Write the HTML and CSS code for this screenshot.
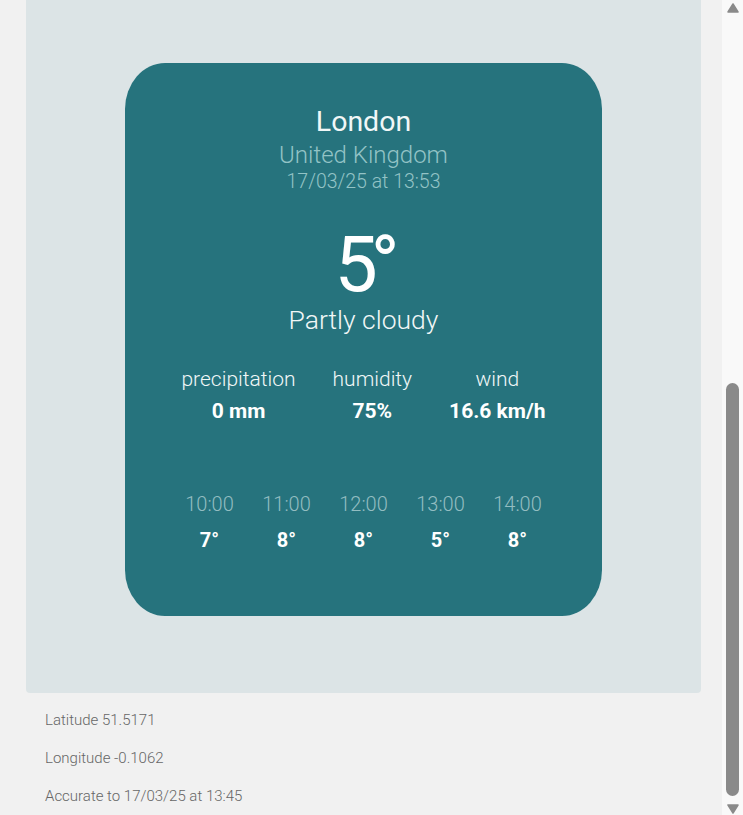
FILE: index.html
```html
<!DOCTYPE html>
<html lang="en">
<head>
<meta charset="utf-8">
<title>Weather</title>
<link rel="stylesheet" href="styles.css">
</head>
<body>
<div class="page">
  <main class="content">
    <section class="panel">
      <article class="card">
        <h1 class="city">London</h1>
        <div class="country">United Kingdom</div>
        <div class="stamp">17/03/25 at 13:53</div>
        <div class="temp">5°</div>
        <div class="cond">Partly cloudy</div>
        <div class="stats">
          <div class="stat"><div class="label">precipitation</div><div class="value">0 mm</div></div>
          <div class="stat"><div class="label">humidity</div><div class="value">75%</div></div>
          <div class="stat"><div class="label">wind</div><div class="value">16.6 km/h</div></div>
        </div>
        <div class="hours">
          <div class="hour"><div class="time">10:00</div><div class="htemp">7°</div></div>
          <div class="hour"><div class="time">11:00</div><div class="htemp">8°</div></div>
          <div class="hour"><div class="time">12:00</div><div class="htemp">8°</div></div>
          <div class="hour"><div class="time">13:00</div><div class="htemp">5°</div></div>
          <div class="hour"><div class="time">14:00</div><div class="htemp">8°</div></div>
        </div>
      </article>
    </section>
    <div class="meta">
      <p>Latitude 51.5171</p>
      <p>Longitude -0.1062</p>
      <p>Accurate to 17/03/25 at 13:45</p>
    </div>
  </main>
  <div class="scrollbar">
    <svg class="arrow up" width="12" height="10" viewBox="0 0 12 10"><path d="M6 1 L11 9 L1 9 Z" fill="#8a8a8a" stroke="#8a8a8a" stroke-linejoin="round" stroke-width="1.5"/></svg>
    <div class="track"><div class="thumb"></div></div>
    <svg class="arrow down" width="12" height="10" viewBox="0 0 12 10"><path d="M1 1 L11 1 L6 9 Z" fill="#8a8a8a" stroke="#8a8a8a" stroke-linejoin="round" stroke-width="1.5"/></svg>
  </div>
</div>
</body>
</html>
```

FILE: styles.css
```css
html, body {
  margin: 0;
  padding: 0;
  height: 815px;
  overflow: hidden;
  background: #f1f1f1;
  font-family: Roboto, "Noto Sans", sans-serif;
}

.page {
  display: flex;
  height: 815px;
}

.content {
  width: 722px;
  flex: none;
}

.panel {
  margin: 0 21px 0 26px;
  height: 693px;
  background: #dce4e6;
  border-radius: 0 0 4px 4px;
  padding-top: 63px;
  box-sizing: border-box;
}

.card {
  width: 477px;
  height: 553px;
  margin: 0 auto;
  background: #26737d;
  border-radius: 40px / 46px;
  box-sizing: border-box;
  padding-top: 42px;
  text-align: center;
  color: #f1f7f7;
}

.city {
  margin: 0;
  font-size: 28.5px;
  font-weight: 400;
  line-height: 34px;
}

.country {
  font-size: 24px;
  font-weight: 300;
  line-height: 32px;
  color: #93c3c6;
}

.stamp {
  font-size: 19.5px;
  font-weight: 300;
  line-height: 22px;
  color: #93c3c6;
}

.temp {
  margin-top: 29px;
  font-size: 77px;
  font-weight: 400;
  line-height: 86px;
  letter-spacing: -7px;
  color: #ffffff;
}

.cond {
  font-size: 26.5px;
  font-weight: 300;
  line-height: 30px;
  margin-top: -3px;
}

.stats {
  display: flex;
  justify-content: center;
  gap: 37px;
  margin-top: 30px;
}

.label {
  font-size: 21px;
  font-weight: 300;
  line-height: 28px;
}

.value {
  font-size: 21px;
  font-weight: 700;
  line-height: 36px;
  color: #ffffff;
}

.hours {
  display: grid;
  grid-template-columns: repeat(5, 77px);
  justify-content: center;
  margin-top: 62px;
}

.time {
  font-size: 20px;
  font-weight: 300;
  line-height: 26px;
  color: #93bdc1;
}

.htemp {
  font-size: 20px;
  font-weight: 700;
  line-height: 46px;
  color: #ffffff;
}

.meta {
  padding: 8px 0 0 45px;
}

.meta p {
  margin: 0;
  font-size: 15px;
  font-weight: 300;
  line-height: 38px;
  color: #666666;
}

.scrollbar {
  width: 21px;
  flex: none;
  background: #f9f9f9;
  display: flex;
  flex-direction: column;
  align-items: center;
}

.arrow {
  flex: none;
  display: block;
}

.arrow.up {
  margin-top: 3px;
}

.arrow.down {
  margin-bottom: 1px;
}

.track {
  flex: 1;
  width: 100%;
  display: flex;
  flex-direction: column;
  justify-content: flex-end;
  align-items: center;
  padding-bottom: 8px;
  box-sizing: border-box;
}

.thumb {
  width: 13px;
  height: 413px;
  background: #8a8a8a;
  border-radius: 7px;
}
```
